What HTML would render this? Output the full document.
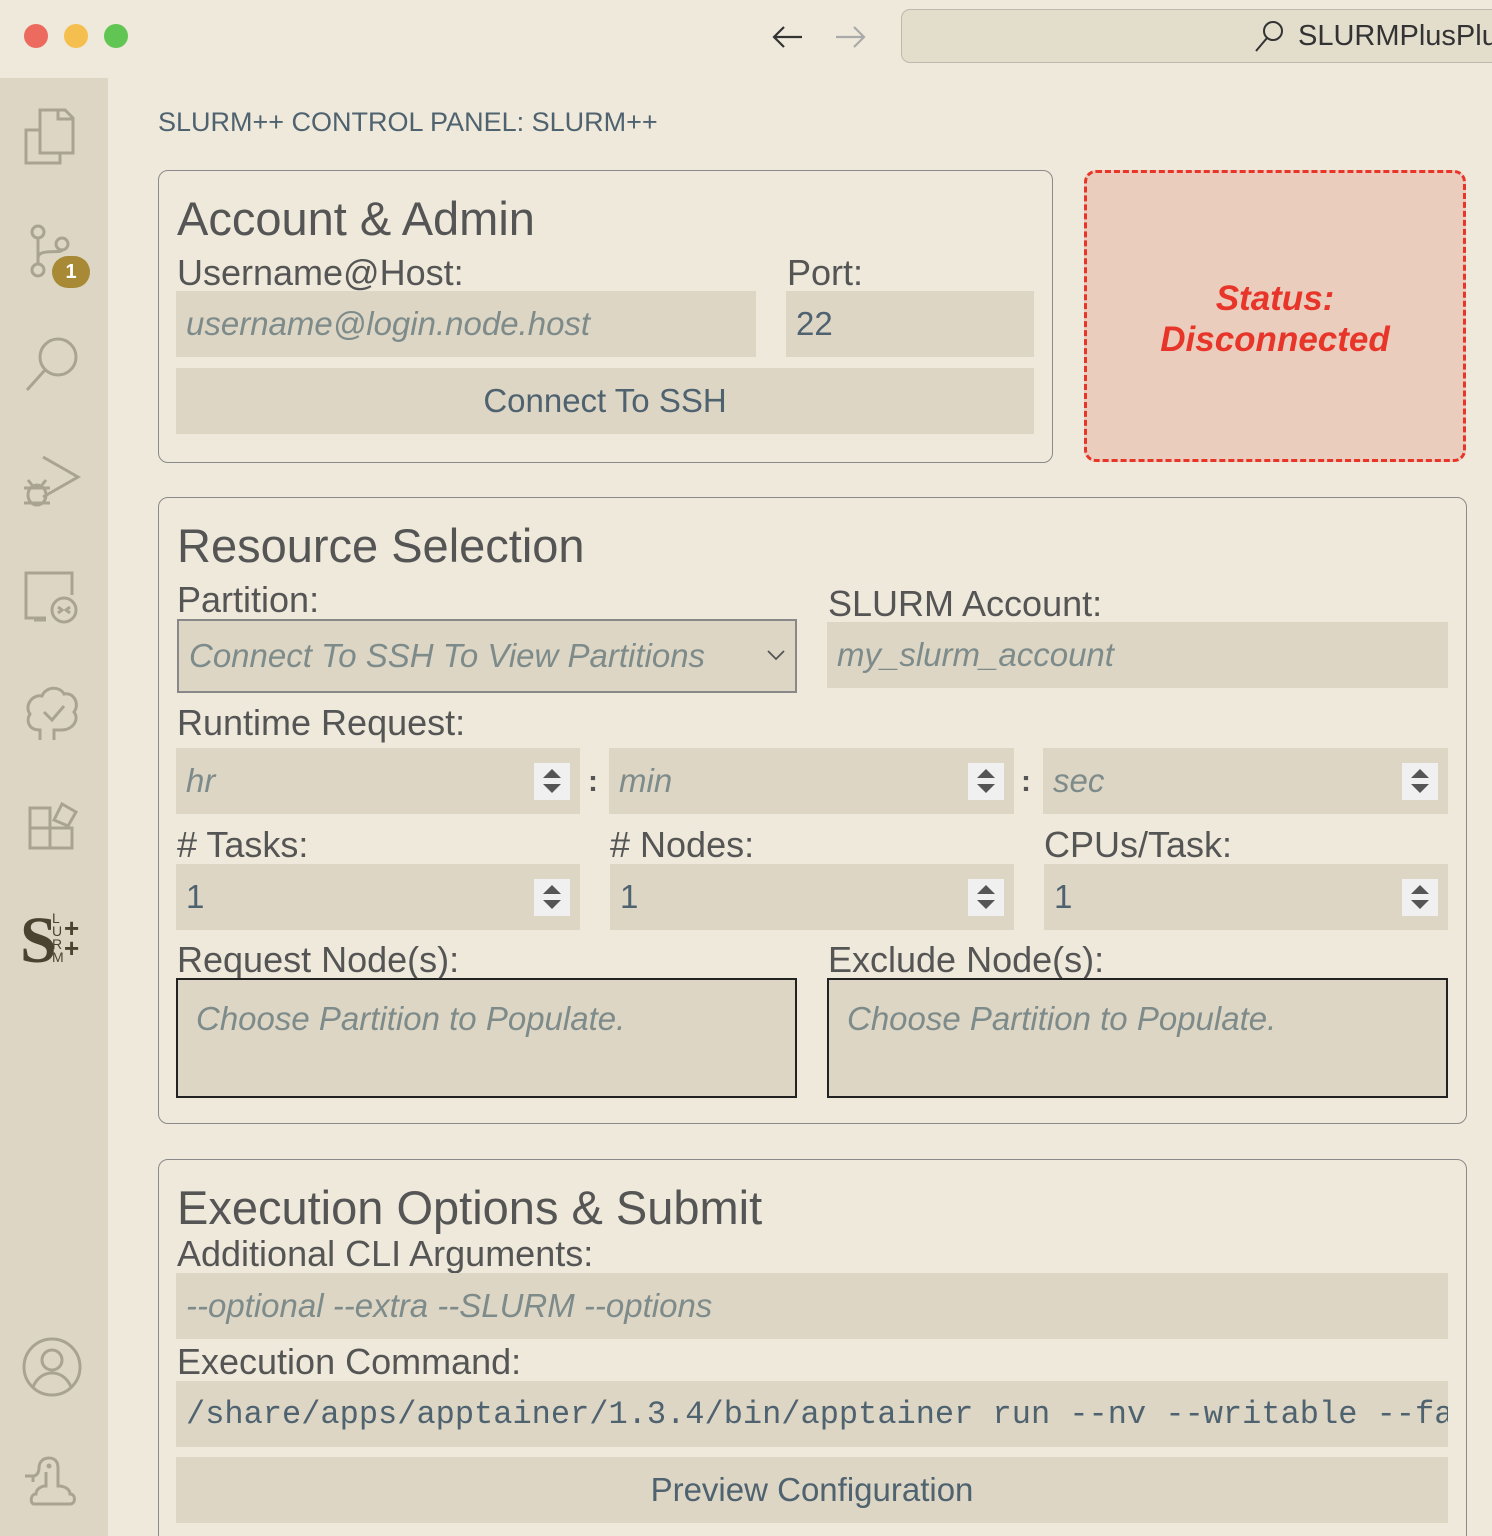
<!DOCTYPE html>
<html style="overflow:hidden"><head><meta charset="utf-8"><style>
*{box-sizing:border-box;margin:0;padding:0}
html,body{width:1492px;height:1536px;overflow:hidden}
body{background:#eee9da;font-family:"Liberation Sans",sans-serif;color:#555}
#w{position:relative;width:1492px;height:1536px;overflow:hidden}
.a{position:absolute;line-height:1;white-space:nowrap}
.side{position:absolute;left:0;top:78px;width:108px;height:1458px;background:#ddd6c4}
.card{position:absolute;border:1.5px solid #8a8a8a;border-radius:10px}
.h{font-size:47px;color:#555}
.l{font-size:36px;color:#555}
.in{position:absolute;background:#ddd6c4;display:flex;align-items:center;padding-left:10px;font-size:33px;color:#4f6270;white-space:nowrap;overflow:hidden}
.ph{font-style:italic;color:#7e8b8b}
.btn{justify-content:center;padding-left:0;color:#4f6270}
.sp{position:absolute;right:10px;top:15px;width:36px;height:37px;background:#f0f0f0}
.sp:before{content:"";position:absolute;left:9px;top:6px;border-left:9px solid transparent;border-right:9px solid transparent;border-bottom:9px solid #555}
.sp:after{content:"";position:absolute;left:9px;top:21px;border-left:9px solid transparent;border-right:9px solid transparent;border-top:9px solid #555}
.ta{position:absolute;border:2px solid #222;background:#ddd6c4;font-size:33px;font-style:italic;color:#7e8b8b;padding:20px 0 0 18px}
.ic{position:absolute;left:0;width:108px}
</style></head><body><div id="w">
<div style="position:absolute;left:24px;top:24px;width:24px;height:24px;border-radius:50%;background:#ec6a5e"></div>
<div style="position:absolute;left:64px;top:24px;width:24px;height:24px;border-radius:50%;background:#f4bf4f"></div>
<div style="position:absolute;left:104px;top:24px;width:24px;height:24px;border-radius:50%;background:#61c554"></div>
<svg style="position:absolute;left:770px;top:22px" width="100" height="30" viewBox="0 0 100 30"><path d="M32 15H4M14 5L4 15l10 10" stroke="#333" stroke-width="2.2" fill="none"/><path d="M66 15h28M84 5l10 10-10 10" stroke="#aaa" stroke-width="2.2" fill="none"/></svg>
<div style="position:absolute;left:901px;top:9px;width:620px;height:54px;border:1.5px solid #bdb9ad;border-radius:9px;background:#e3ddcc"></div>
<svg style="position:absolute;left:1252px;top:18px" width="36" height="36" viewBox="0 0 36 36"><circle cx="21" cy="13" r="9" stroke="#333" stroke-width="2" fill="none"/><path d="M15 20L4 33" stroke="#333" stroke-width="2"/></svg>
<div class="a" style="left:1298px;top:22px;font-size:29px;color:#333">SLURMPlusPlus</div>

<div class="side"></div>
<svg class="ic" style="top:100px" height="880" viewBox="0 100 108 880" fill="none" stroke="#a9a491" stroke-width="3">
<path d="M40 110h25l8 8v35H40z M58 110v9h15"/><path d="M40 130H26v33h34v-10"/>
<circle cx="38" cy="232" r="6"/><circle cx="38" cy="270" r="6"/><circle cx="62" cy="244" r="6"/><path d="M38 238v26M38 258c0-10 24-4 24-8"/>
<circle cx="58" cy="357" r="18"/><path d="M45 370L27 390"/>
<path d="M43 457l35 20-35 20"/><ellipse cx="37" cy="495" rx="9" ry="10"/><path d="M24 488h26M24 503h26M28 480l4 5M46 480l-4 5"/>
<path d="M72 595v-22H26v45h20M34 620h12"/><circle cx="64" cy="610" r="12"/><path d="M58 607l4 3-4 3M70 607l-4 3 4 3"/>
<path d="M40 740v-10c-12 0-14-10-10-16-6-8 2-20 12-18 4-10 18-10 22-2 10-2 16 10 10 18 6 8-2 18-12 18h-8v10M44 712l8 8 12-14"/>
<path d="M30 808h20v20H30zM30 828h20v20H30zM50 828h22v20H50zM54 820l8-16 14 8-8 14z"/>
</svg>
<div style="position:absolute;left:52px;top:256px;width:38px;height:32px;border-radius:16px;background:#a88a36;color:#fff;font-weight:bold;font-size:20px;text-align:center;line-height:32px">1</div>
<div class="a" style="left:20px;top:908px;font-size:66px;font-family:'Liberation Serif',serif;font-weight:bold;color:#4a4330">S</div>
<div class="a" style="left:52px;top:912px;font-size:14px;line-height:13px;color:#4a4330;white-space:normal;width:12px">L<br>U<br>R<br>M</div>
<div class="a" style="left:64px;top:918px;font-size:26px;font-weight:bold;line-height:20px;color:#4a4330;white-space:normal">+<br>+</div>
<svg style="position:absolute;left:20px;top:1335px" width="64" height="64" viewBox="0 0 64 64" fill="none" stroke="#a9a491" stroke-width="3"><circle cx="32" cy="32" r="28"/><circle cx="32" cy="25" r="10"/><path d="M13 52c4-10 12-14 19-14s15 4 19 14"/></svg>
<svg style="position:absolute;left:22px;top:1452px" width="60" height="56" viewBox="0 0 60 56" fill="none" stroke="#a9a491" stroke-width="3"><path d="M3 24h8v6M11 24c4 0 6-4 6-8 0-6 4-10 10-10s9 4 9 10v18c8 0 12 4 12 8 6 0 6 10 0 10H12c-4 0-4-10 2-10 0-4 4-8 10-8V20"/><circle cx="27" cy="14" r="1" fill="#a9a491"/></svg>

<div class="a" style="left:158px;top:109px;font-size:27px;color:#4f6270">SLURM++ CONTROL PANEL: SLURM++</div>

<div class="card" style="left:158px;top:170px;width:895px;height:293px"></div>
<div class="a h" style="left:177px;top:195px">Account &amp; Admin</div>
<div class="a l" style="left:177px;top:255px">Username@Host:</div>
<div class="a l" style="left:787px;top:255px">Port:</div>
<div class="in ph" style="left:176px;top:291px;width:580px;height:66px">username@login.node.host</div>
<div class="in" style="left:786px;top:291px;width:248px;height:66px">22</div>
<div class="in btn" style="left:176px;top:368px;width:858px;height:66px">Connect To SSH</div>

<div style="position:absolute;left:1084px;top:170px;width:382px;height:292px;border:3px dashed #e8352a;border-radius:12px;background:#ebcdbd"></div>
<div class="a" style="left:1084px;top:278px;width:382px;text-align:center;font-size:35px;font-weight:bold;font-style:italic;color:#e8352a;line-height:41px;white-space:normal">Status:<br>Disconnected</div>

<div class="card" style="left:158px;top:497px;width:1309px;height:627px"></div>
<div class="a h" style="left:177px;top:522px">Resource Selection</div>
<div class="a l" style="left:177px;top:582px">Partition:</div>
<div class="a l" style="left:828px;top:586px">SLURM Account:</div>
<div class="in ph" style="left:177px;top:619px;width:620px;height:74px;border:2px solid #888">Connect To SSH To View Partitions</div>
<svg style="position:absolute;left:766px;top:648px" width="20" height="14" viewBox="0 0 20 14"><path d="M2 3l8 8 8-8" stroke="#555" stroke-width="1.8" fill="none"/></svg>
<div class="in ph" style="left:827px;top:622px;width:621px;height:66px">my_slurm_account</div>
<div class="a l" style="left:177px;top:705px">Runtime Request:</div>
<div class="in ph" style="left:176px;top:748px;width:404px;height:66px">hr<div class="sp"></div></div>
<div class="a" style="left:588px;top:767px;font-size:30px;font-weight:bold;color:#555">:</div>
<div class="in ph" style="left:609px;top:748px;width:405px;height:66px">min<div class="sp"></div></div>
<div class="a" style="left:1021px;top:767px;font-size:30px;font-weight:bold;color:#555">:</div>
<div class="in ph" style="left:1043px;top:748px;width:405px;height:66px">sec<div class="sp"></div></div>
<div class="a l" style="left:177px;top:827px"># Tasks:</div>
<div class="a l" style="left:610px;top:827px"># Nodes:</div>
<div class="a l" style="left:1044px;top:827px">CPUs/Task:</div>
<div class="in" style="left:176px;top:864px;width:404px;height:66px">1<div class="sp"></div></div>
<div class="in" style="left:610px;top:864px;width:404px;height:66px">1<div class="sp"></div></div>
<div class="in" style="left:1044px;top:864px;width:404px;height:66px">1<div class="sp"></div></div>
<div class="a l" style="left:177px;top:942px">Request Node(s):</div>
<div class="a l" style="left:828px;top:942px">Exclude Node(s):</div>
<div class="ta" style="left:176px;top:978px;width:621px;height:120px">Choose Partition to Populate.</div>
<div class="ta" style="left:827px;top:978px;width:621px;height:120px">Choose Partition to Populate.</div>

<div class="card" style="left:158px;top:1159px;width:1309px;height:420px"></div>
<div class="a h" style="left:177px;top:1184px">Execution Options &amp; Submit</div>
<div class="a l" style="left:177px;top:1236px">Additional CLI Arguments:</div>
<div class="in ph" style="left:176px;top:1273px;width:1272px;height:66px">--optional --extra --SLURM --options</div>
<div class="a l" style="left:177px;top:1344px">Execution Command:</div>
<div class="in" style="left:176px;top:1381px;width:1272px;height:66px;font-family:'Liberation Mono',monospace;font-size:32px">/share/apps/apptainer/1.3.4/bin/apptainer run --nv --writable --fakeroot</div>
<div class="in btn" style="left:176px;top:1457px;width:1272px;height:66px">Preview Configuration</div>
</div></body></html>
